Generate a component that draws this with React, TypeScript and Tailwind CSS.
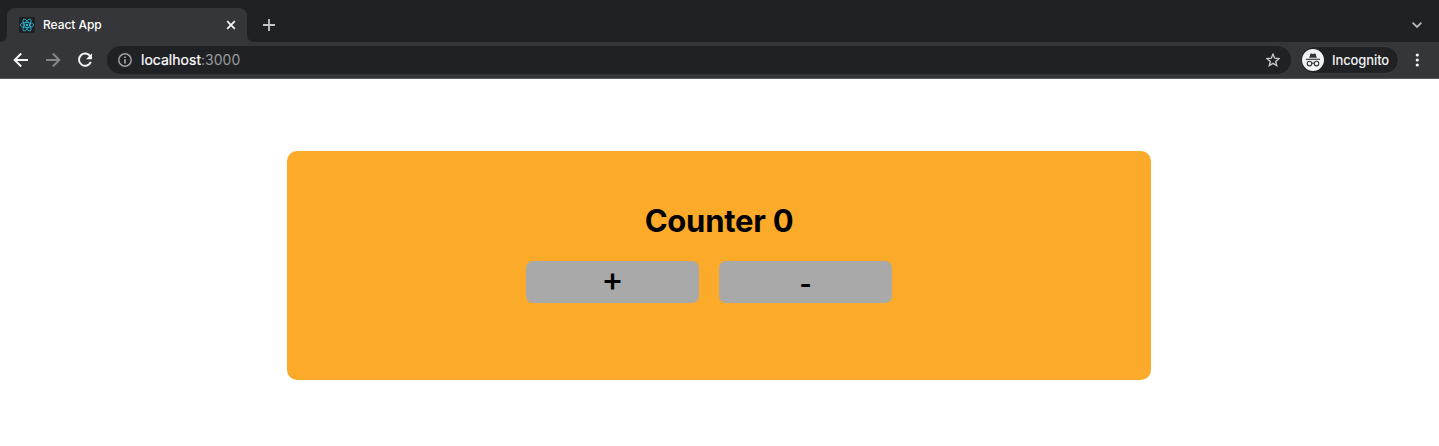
import { useState } from "react";

function ReactLogo() {
  return (
    <svg className="size-4 shrink-0" viewBox="0 0 16 16" fill="none" stroke="#2bb5d8" strokeWidth="0.85">
      <rect width="16" height="16" rx="1.5" fill="#202020" stroke="none" />
      <ellipse cx="8" cy="8" rx="6.7" ry="2.6" />
      <ellipse cx="8" cy="8" rx="6.7" ry="2.6" transform="rotate(60 8 8)" />
      <ellipse cx="8" cy="8" rx="6.7" ry="2.6" transform="rotate(120 8 8)" />
      <circle cx="8" cy="8" r="1.3" fill="#2bb5d8" stroke="none" />
    </svg>
  );
}

function TabStrip() {
  return (
    <div className="flex h-[42px] items-end bg-[#202124]">
      <svg className="h-[34px] w-[7px] shrink-0" viewBox="0 0 7 34">
        <path d="M7 26 Q7 34 0 34 H7Z" fill="#35363a" />
      </svg>
      <div className="flex h-[34px] w-[240px] items-center rounded-t-lg bg-[#35363a] pr-[11px] pl-3">
        <ReactLogo />
        <span className="ml-2 flex-1 text-[12px] leading-4 font-medium tracking-[-0.05px] text-white">React App</span>
        <svg className="size-[10px]" viewBox="0 0 10 10" stroke="#f1f3f4" strokeWidth="1.8">
          <path d="M1.2 1.2 8.8 8.8M8.8 1.2 1.2 8.8" />
        </svg>
      </div>
      <svg className="h-[34px] w-[8px] shrink-0" viewBox="0 0 8 34">
        <path d="M0 26 Q0 34 8 34 H0Z" fill="#35363a" />
      </svg>
      <div className="flex h-[34px] flex-1 items-center justify-between pr-[17px] pl-2">
        <svg className="size-3" viewBox="0 0 12 12" stroke="#c4c7ca" strokeWidth="1.8">
          <path d="M6 0V12M0 6H12" />
        </svg>
        <svg className="h-[6px] w-[10px]" viewBox="0 0 10 6" fill="none" stroke="#b5b8bc" strokeWidth="1.8">
          <path d="M0.6 0.7 5 5 9.4 0.7" />
        </svg>
      </div>
    </div>
  );
}

function Incognito() {
  return (
    <div className="ml-[9px] flex h-7 w-[99px] items-center rounded-full border border-[#3c3d41] bg-[#202124] pl-px">
      <svg className="size-[22px] shrink-0" viewBox="0 0 22 22">
        <circle cx="11" cy="11" r="11" fill="#f1f3f4" />
        <path d="M7.2 8.7 8.3 5 Q8.6 4.2 9.4 4.5 L11 5 12.6 4.5 Q13.4 4.2 13.7 5 L14.8 8.7Z" fill="#35363a" />
        <path d="M4 10.3H18" stroke="#35363a" strokeWidth="1.1" />
        <g fill="none" stroke="#35363a" strokeWidth="1.1">
          <circle cx="7.5" cy="14.6" r="2.3" />
          <circle cx="14.5" cy="14.6" r="2.3" />
          <path d="M9.8 14.4Q11 13.7 12.2 14.4" />
        </g>
      </svg>
      <span className="ml-2 text-[13px] leading-4 font-medium tracking-[-0.1px] text-[#f1f3f4]">Incognito</span>
    </div>
  );
}

function Toolbar() {
  return (
    <div className="flex h-[37px] items-center border-b border-[#55575b] bg-[#35363a] pl-[13px]">
      <svg className="size-4" viewBox="0 0 16 16" fill="none" stroke="#f1f3f4" strokeWidth="2">
        <path d="M15 8H2.2M8.2 1.5 1.7 8 8.2 14.5" />
      </svg>
      <svg className="ml-4 size-4" viewBox="0 0 16 16" fill="none" stroke="#84868a" strokeWidth="2">
        <path d="M1 8H13.8M7.8 1.5 14.3 8 7.8 14.5" />
      </svg>
      <svg className="ml-4 size-4" viewBox="0 0 16 16">
        <path d="M13.3 4.5A6.1 6.1 0 1 0 13.8 9.8" fill="none" stroke="#f1f3f4" strokeWidth="2" />
        <path d="M15 1.2V7.2H9Z" fill="#f1f3f4" />
      </svg>
      <div className="ml-[14px] flex h-7 w-[1184px] items-center rounded-full bg-[#202124] pr-[11px] pl-[11px]">
        <svg className="size-[14px]" viewBox="0 0 14 14" fill="none" stroke="#9aa0a6" strokeWidth="1.5">
          <circle cx="7" cy="7" r="6.2" />
          <path d="M7 6.2V10.5M7 3.5V5.1" strokeWidth="1.8" />
        </svg>
        <span className="ml-[9px] flex-1 text-[14px] leading-4 tracking-[0.02px] text-[#9a9b9e]">
          <span className="text-white [-webkit-text-stroke:0.2px_white]">localhost</span>:3000
        </span>
        <svg className="size-[14px]" viewBox="0 0 14 14" fill="none" stroke="#c4c7ca" strokeWidth="1.4">
          <path d="M7 1.2 8.7 5.2 13 5.6 9.7 8.4 10.7 12.6 7 10.4 3.3 12.6 4.3 8.4 1 5.6 5.3 5.2Z" />
        </svg>
      </div>
      <Incognito />
      <svg className="ml-4 h-[14px] w-1" viewBox="0 0 4 14" fill="#f1f3f4">
        <circle cx="2.3" cy="2" r="1.6" />
        <circle cx="2.3" cy="7" r="1.6" />
        <circle cx="2.3" cy="12" r="1.6" />
      </svg>
    </div>
  );
}

export default function App() {
  const [count, setCount] = useState(0);
  return (
    <div className="h-[446px] overflow-hidden bg-white font-['Inter',sans-serif]">
      <TabStrip />
      <Toolbar />
      <main className="mt-[72px] ml-[287px] h-[229px] w-[864px] rounded-[10px] bg-[#fcaa2a] pt-[50px]">
        <h1 className="text-center text-[31px] leading-10 font-bold tracking-[-0.25px] text-black">Counter {count}</h1>
        <div className="mt-5 ml-[239px] flex gap-5">
          <button
            className="flex h-[42px] w-[173px] items-center justify-center rounded-[7px] bg-[#a9a9a9]"
            aria-label="Increase"
            onClick={() => setCount(count + 1)}
          >
            <span className="pb-1.5 text-[33px] leading-8 font-medium text-black">+</span>
          </button>
          <button
            className="flex h-[42px] w-[173px] items-center justify-center rounded-[7px] bg-[#a9a9a9]"
            aria-label="Decrease"
            onClick={() => setCount(count - 1)}
          >
            <span className="pt-1 text-[26px] leading-8 font-bold text-black">-</span>
          </button>
        </div>
      </main>
    </div>
  );
}
